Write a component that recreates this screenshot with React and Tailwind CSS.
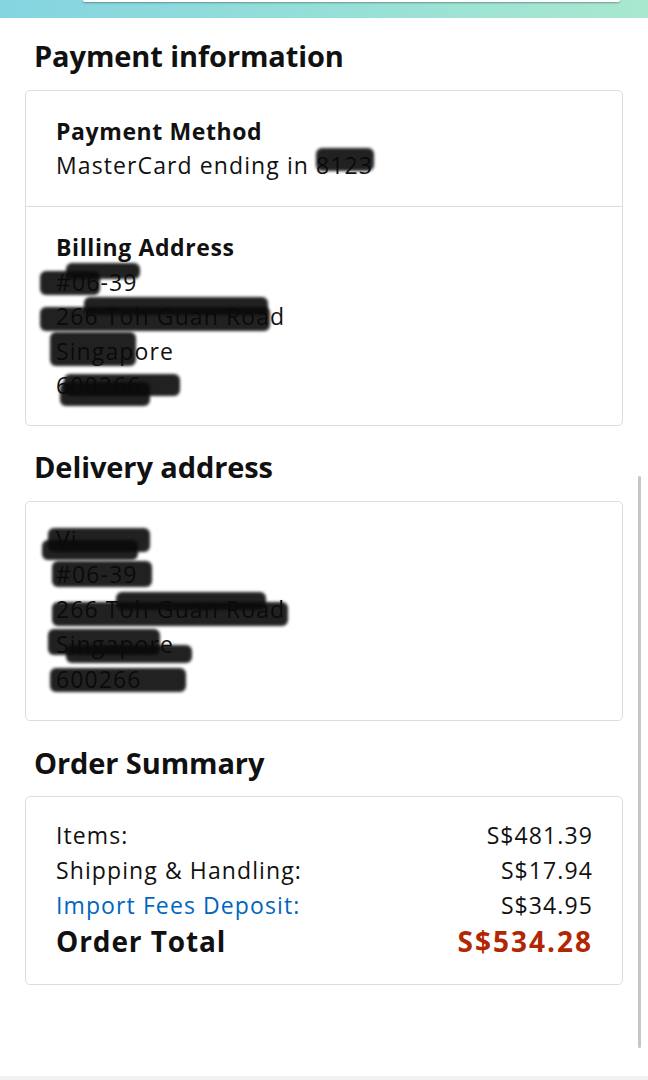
import React from 'react';

const font = { fontFamily: '"Open Sans", "Noto Sans", sans-serif' };

// dark marker stroke drawn over redacted text
function Blob({ className }) {
  return <span className={`absolute bg-[#0a0a0a] rounded-[6px] blur-[1.5px] opacity-90 ${className}`} />;
}

function Line({ children, blobs }) {
  return (
    <div className="relative">
      <span>{children}</span>
      {blobs}
    </div>
  );
}

function Heading({ children, className = '' }) {
  return (
    <h2 className={`pl-[34px] text-[29px] leading-[40px] font-bold tracking-[-0.1px] text-[#111] ${className}`}>{children}</h2>
  );
}

function Card({ children, className = '' }) {
  return (
    <div className={`mx-[25px] border border-[#dddddd] rounded-[5px] bg-white ${className}`}>{children}</div>
  );
}

export default function App() {
  return (
    <div className="relative w-[648px] h-[1080px] bg-white overflow-hidden text-[#111] tracking-[1.1px]" style={font}>
      {/* top search bar strip */}
      <div className="h-[18px] bg-gradient-to-r from-[#84d5e0] to-[#a8e8cf] pl-[83px] pr-[28px]">
        <div className="h-[2px] bg-white shadow-[0_1px_2px_rgba(0,0,0,0.35)] rounded-b-[3px]" />
      </div>

      <Heading className="mt-[18px] mb-[14px]">Payment information</Heading>
      <Card>
        <div className="pl-[30px] pt-[23px] pb-[24px] border-b border-[#dddddd] text-[23px] leading-[34px]">
          <div className="font-bold tracking-[0.6px]">Payment Method</div>
          <div>
            MasterCard ending in 8
            <span className="relative">
              123
              <Blob className="left-[-14px] top-[-1px] w-[58px] h-[23px]" />
            </span>
          </div>
        </div>
        <div className="pl-[30px] pt-[23px] pb-[22px] text-[23px] leading-[34.5px]">
          <div className="font-bold tracking-[0.6px]">Billing Address</div>
          <Line
            blobs={
              <>
                <Blob className="left-[-16px] top-[6px] w-[60px] h-[24px]" />
                <Blob className="left-[10px] top-[-2px] w-[74px] h-[16px]" />
              </>
            }
          >
            #06-39
          </Line>
          <Line
            blobs={
              <>
                <Blob className="left-[-16px] top-[8px] w-[230px] h-[24px]" />
                <Blob className="left-[28px] top-[-2px] w-[184px] h-[18px]" />
              </>
            }
          >
            266 Toh Guan Road
          </Line>
          <Line blobs={<Blob className="left-[-6px] top-[-2px] w-[86px] h-[34px]" />}>Singapore</Line>
          <Line
            blobs={
              <>
                <Blob className="left-[8px] top-[6px] w-[116px] h-[22px]" />
                <Blob className="left-[4px] top-[14px] w-[90px] h-[24px]" />
              </>
            }
          >
            600266
          </Line>
        </div>
      </Card>

      <Heading className="mt-[21px] mb-[14px]">Delivery address</Heading>
      <Card>
        <div className="pl-[30px] pt-[20px] pb-[23px] text-[23px] leading-[35px]">
          <Line
            blobs={
              <>
                <Blob className="left-[-8px] top-[6px] w-[102px] h-[24px]" />
                <Blob className="left-[-14px] top-[18px] w-[96px] h-[20px]" />
              </>
            }
          >
            Vi
          </Line>
          <Line blobs={<Blob className="left-[-4px] top-[4px] w-[100px] h-[26px]" />}>#06-39</Line>
          <Line
            blobs={
              <>
                <Blob className="left-[-4px] top-[10px] w-[236px] h-[24px]" />
                <Blob className="left-[60px] top-[0px] w-[150px] h-[18px]" />
              </>
            }
          >
            266 Toh Guan Road
          </Line>
          <Line
            blobs={
              <>
                <Blob className="left-[-8px] top-[2px] w-[112px] h-[26px]" />
                <Blob className="left-[10px] top-[18px] w-[126px] h-[18px]" />
              </>
            }
          >
            Singapore
          </Line>
          <Line blobs={<Blob className="left-[-6px] top-[6px] w-[136px] h-[24px]" />}>600266</Line>
        </div>
      </Card>

      <Heading className="mt-[22px] mb-[13px]">Order Summary</Heading>
      <Card className="pl-[30px] pr-[29px] pt-[21px] pb-[25px]">
        <div className="text-[23px] leading-[35px]">
          <div className="flex justify-between">
            <span>Items:</span>
            <span>S$481.39</span>
          </div>
          <div className="flex justify-between">
            <span>Shipping &amp; Handling:</span>
            <span>S$17.94</span>
          </div>
          <div className="flex justify-between">
            <span className="text-[#0066c0]">Import Fees Deposit:</span>
            <span>S$34.95</span>
          </div>
        </div>
        <div className="flex justify-between text-[28px] leading-[36px] font-bold tracking-[0.9px]">
          <span>Order Total</span>
          <span className="text-[#b12704] tracking-[2px]">S$534.28</span>
        </div>
      </Card>

      {/* scrollbar */}
      <div className="absolute left-[638px] top-[476px] w-[3px] h-[572px] bg-[#c6c6c6] rounded-full" />
      <div className="absolute left-0 bottom-0 w-full h-[4px] bg-[#f2f2f2]" />
    </div>
  );
}
